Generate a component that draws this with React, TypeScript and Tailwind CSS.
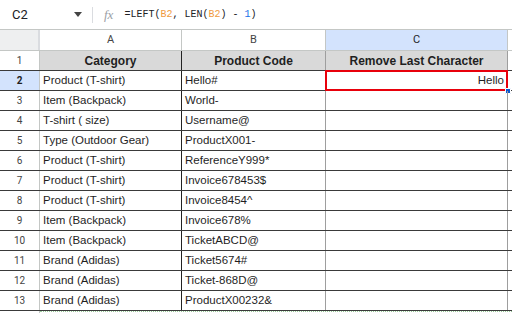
import React from "react"

const rows: [string, string][] = [
  ["Product (T-shirt)", "Hello#"],
  ["Item (Backpack)", "World-"],
  ["T-shirt ( size)", "Username@"],
  ["Type (Outdoor Gear)", "ProductX001-"],
  ["Product (T-shirt)", "ReferenceY999*"],
  ["Product (T-shirt)", "Invoice678453$"],
  ["Product (T-shirt)", "Invoice8454^"],
  ["Item (Backpack)", "Invoice678%"],
  ["Item (Backpack)", "TicketABCD@"],
  ["Brand (Adidas)", "Ticket5674#"],
  ["Brand (Adidas)", "Ticket-868D@"],
  ["Brand (Adidas)", "ProductX00232&"],
]

const cellFont = { fontFamily: '"Liberation Sans", Arial, sans-serif' }

export default function App() {
  return (
    <div className="w-[512px] h-[313px] overflow-hidden bg-white text-[#1f1f1f]" style={cellFont}>
      {/* Formula bar */}
      <div className="flex h-[30px] items-center border-b border-[#c4c7c5] bg-white">
        <div className="flex w-[92px] items-center justify-between pl-[12px] pr-[10px]">
          <span className="text-[13px] text-[#202124]" style={{ fontFamily: "Roboto, sans-serif" }}>C2</span>
          <svg width="8" height="5" viewBox="0 0 8 5">
            <path d="M0 0h8L4 5z" fill="#444" />
          </svg>
        </div>
        <div className="h-[16px] w-px bg-[#dadce0]" />
        <span className="ml-[11px] text-[13px] italic text-[#9aa0a6]" style={{ fontFamily: '"Liberation Serif", serif' }}>fx</span>
        <span className="ml-[11px] text-[10px] text-[#202124]" style={{ fontFamily: '"Liberation Mono", monospace' }}>
          =LEFT(<span className="text-[#f09a3e]">B2</span>, LEN(<span className="text-[#f09a3e]">B2</span>) - <span className="text-[#1a73e8]">1</span>)
        </span>
      </div>

      {/* Column headers */}
      <div className="flex h-[21px] border-b border-[#c4c7c5] text-[11px] text-[#444]" style={{ fontFamily: "Roboto, sans-serif" }}>
        <div className="w-[40px] border-r-2 border-[#dadce0] bg-[#eeeff0]" />
        <div className="flex w-[142px] items-center justify-center border-r border-[#c4c7c5]">A</div>
        <div className="flex w-[144px] items-center justify-center border-r border-[#c4c7c5]">B</div>
        <div className="flex w-[182px] items-center justify-center border-r border-[#c4c7c5] bg-[#d3e3fd] text-[#1f1f1f]">C</div>
        <div className="flex-1" />
      </div>

      {/* Header row */}
      <div className="flex h-[20px] border-b border-[#3a3a3a]">
        <div className="flex w-[40px] items-center justify-center border-r border-[#c4c7c5] text-[10px] text-[#444]" style={{ fontFamily: "Roboto, sans-serif" }}>1</div>
        <div className="flex w-[142px] items-center justify-center border-r border-[#222] bg-[#d9d9d9] text-[12px] font-bold">Category</div>
        <div className="flex w-[144px] items-center justify-center border-r border-[#9e9e9e] bg-[#d9d9d9] text-[12px] font-bold">Product Code</div>
        <div className="flex w-[182px] items-center justify-center border-r border-[#9e9e9e] bg-[#d9d9d9] text-[12px] font-bold">Remove Last Character</div>
        <div className="flex-1" />
      </div>

      {rows.map(([cat, code], i) => {
        const n = i + 2
        const sel = n === 2
        return (
          <div key={n} className="flex h-[20px] border-b border-[#3a3a3a]">
            <div
              className={
                sel
                  ? "flex w-[40px] items-center justify-center border-r border-[#c4c7c5] bg-[#d3e3fd] text-[10px] font-bold text-[#1f1f1f]"
                  : "flex w-[40px] items-center justify-center border-r border-[#c4c7c5] bg-white text-[10px] text-[#444]"
              }
              style={{ fontFamily: "Roboto, sans-serif" }}
            >
              {n}
            </div>
            <div className="flex w-[142px] items-center border-r border-[#222] pl-[3px] text-[11.5px]">{cat}</div>
            <div className="flex w-[144px] items-center border-r border-[#9e9e9e] pl-[3px] text-[11.5px]">{code}</div>
            <div className="relative flex w-[182px] items-center justify-end border-r border-[#9e9e9e] pr-[3px] text-[11.5px]">
              {sel && (
                <>
                  <div className="absolute -top-px -left-px -right-px -bottom-px border-2 border-[#e8000b]" />
                  <div className="absolute -right-[4px] -bottom-[4px] h-[6px] w-[6px] rounded-[1px] border border-white bg-[#0b57d0]" />
                </>
              )}
              {sel ? "Hello" : ""}
            </div>
            <div className="flex-1" />
          </div>
        )
      })}
      <div className="flex h-[2px]">
        <div className="w-[40px] border-r border-[#c4c7c5]" />
        <div className="flex-1 border-t border-dotted border-[#9ccc9c]" />
      </div>
    </div>
  )
}
